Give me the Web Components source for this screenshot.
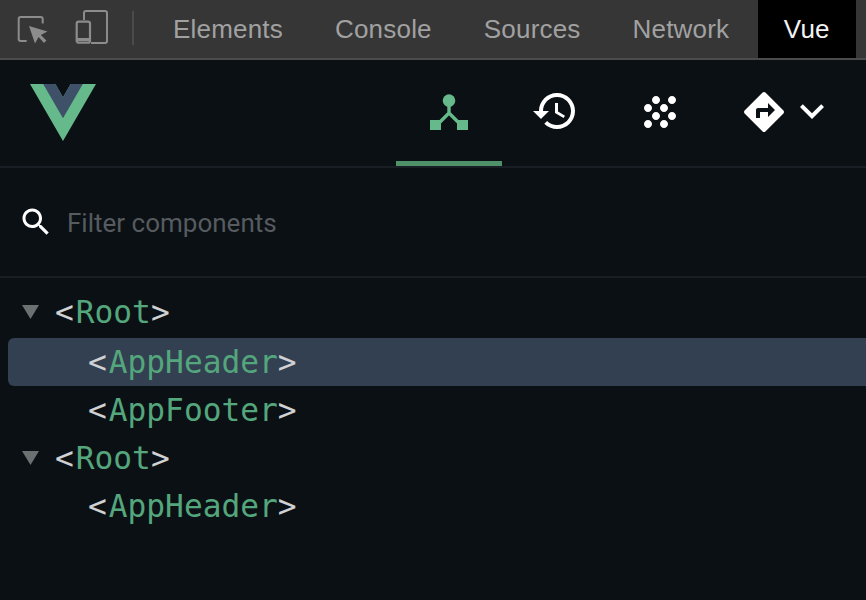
<!DOCTYPE html>
<html>
<head>
<meta charset="utf-8">
<title>Vue devtools</title>
<style>
  html, body { margin: 0; height: 100%; background: #0b1014; }
  body { display: flex; flex-direction: column; height: 600px; overflow: hidden; }
</style>
</head>
<body>
<devtools-bar>
  <devtools-tab>Elements</devtools-tab>
  <devtools-tab>Console</devtools-tab>
  <devtools-tab>Sources</devtools-tab>
  <devtools-tab>Network</devtools-tab>
  <devtools-tab active>Vue</devtools-tab>
</devtools-bar>
<vue-header>
  <header-tab icon="tree" active></header-tab>
  <header-tab icon="history"></header-tab>
  <header-tab icon="grain"></header-tab>
  <header-tab icon="routing" menu></header-tab>
</vue-header>
<filter-box placeholder="Filter components"></filter-box>
<component-tree>
  <tree-row expanded>Root</tree-row>
  <tree-row depth="1" selected>AppHeader</tree-row>
  <tree-row depth="1">AppFooter</tree-row>
  <tree-row expanded>Root</tree-row>
  <tree-row depth="1">AppHeader</tree-row>
</component-tree>

<script>
// material icon paths, 24 unit box
const ICONS = {
  history: 'M13 3c-4.97 0-9 4.03-9 9H1l3.89 3.89.07.14L9 12H6c0-3.87 3.13-7 7-7s7 3.13 7 7-3.13 7-7 7c-1.93 0-3.68-.79-4.94-2.06l-1.42 1.42C8.27 19.99 10.51 21 13 21c4.97 0 9-4.03 9-9s-4.03-9-9-9zm-1 5v5l4.28 2.54.72-1.21-3.5-2.08V8H12z',
  grain: 'M10 12c-1.1 0-2 .9-2 2s.9 2 2 2 2-.9 2-2-.9-2-2-2zM6 8c-1.1 0-2 .9-2 2s.9 2 2 2 2-.9 2-2-.9-2-2-2zm0 8c-1.1 0-2 .9-2 2s.9 2 2 2 2-.9 2-2-.9-2-2-2zm12-8c1.1 0 2-.9 2-2s-.9-2-2-2-2 .9-2 2 .9 2 2 2zm-4 8c-1.1 0-2 .9-2 2s.9 2 2 2 2-.9 2-2-.9-2-2-2zm4-4c-1.1 0-2 .9-2 2s.9 2 2 2 2-.9 2-2-.9-2-2-2zm-4-4c-1.1 0-2 .9-2 2s.9 2 2 2 2-.9 2-2-.9-2-2-2zm-4-4c-1.1 0-2 .9-2 2s.9 2 2 2 2-.9 2-2-.9-2-2-2z',
  routing: 'M21.71 11.29l-9-9c-.39-.39-1.02-.39-1.41 0l-9 9c-.39.39-.39 1.02 0 1.41l9 9c.39.39 1.02.39 1.41 0l9-9c.39-.38.39-1.01 0-1.41zM14 14.5V12h-4v3H8v-4c0-.55.45-1 1-1h5V7.5l3.5 3.5-3.5 3.5z',
  more: 'M16.59 8.59L12 13.17 7.41 8.59 6 10l6 6 6-6z',
  search: 'M15.5 14h-.79l-.28-.27C15.41 12.59 16 11.11 16 9.5 16 5.91 13.09 3 9.5 3S3 5.91 3 9.5 5.91 16 9.5 16c1.61 0 3.09-.59 4.23-1.57l.27.28v.79l5 4.99L20.49 19l-4.99-5zm-6 0C7.01 14 5 11.99 5 9.5S7.01 5 9.5 5 14 7.01 14 9.5 11.99 14 9.5 14z'
};

class DevtoolsBar extends HTMLElement {
  constructor() {
    super();
    this.attachShadow({ mode: 'open' });
    this.shadowRoot.innerHTML = `
      <style>
        :host {
          display: flex;
          flex: none;
          height: 58px;
          padding-left: 14px;
          background: #363636;
          border-bottom: 2px solid #4b4b4b;
          font: 26px "Liberation Sans", Arial, sans-serif;
          letter-spacing: .2px;
        }
        svg { flex: none; width: 36px; height: 58px; fill: none; stroke: #8c8c8c; stroke-width: 2; }
        svg + svg { margin-left: 24px; }
        .sep { flex: none; width: 2px; height: 34px; margin: 11px 13px 0 22px; background: #4b4b4b; }
      </style>
      <svg viewBox="0 0 36 58">
        <path d="M12.7 41H6.7a2 2 0 0 1-2-2V19a2 2 0 0 1 2-2h20a2 2 0 0 1 2 2v4.5"/>
        <path d="M15 26l6 17.5 3.6-6.5 5.4 6 2.4-2.5-5.5-5.5 6.6-3.5z" fill="#8c8c8c" stroke="none"/>
      </svg>
      <svg viewBox="0 0 36 58">
        <path d="M10 20v-7a2 2 0 0 1 2-2h19a2 2 0 0 1 2 2v28a2 2 0 0 1-2 2H17"/>
        <rect x="2.7" y="21.7" width="13.3" height="21" rx="2" stroke-width="2.2"/>
        <path d="M3 39.5h13" stroke-width="3"/>
      </svg>
      <div class="sep"></div>
      <slot></slot>
    `;
  }
}

class DevtoolsTab extends HTMLElement {
  constructor() {
    super();
    this.attachShadow({ mode: 'open' });
    this.shadowRoot.innerHTML = `
      <style>
        :host {
          display: flex;
          align-items: center;
          padding: 0 26px;
          color: #a1a1a1;
        }
        :host([active]) { background: #000; color: #f2f2f2; margin-left: 2.5px; }
      </style>
      <slot></slot>
    `;
  }
}

class VueHeader extends HTMLElement {
  constructor() {
    super();
    this.attachShadow({ mode: 'open' });
    this.shadowRoot.innerHTML = `
      <style>
        :host {
          display: flex;
          flex: none;
          align-items: flex-start;
          height: 106px;
          padding: 0 4px 0 30px;
          border-bottom: 2px solid #181e24;
        }
        .logo { flex: none; width: 66px; height: 57px; margin-top: 24px; }
        .tabs { display: flex; margin-left: auto; height: 106px; }
      </style>
      <svg class="logo" viewBox="0 0 261.76 226.69" preserveAspectRatio="none">
        <path fill="#65b98a" d="M161.096.001l-30.225 52.351L100.647.001H-.005l130.877 226.688L261.749.001z"/>
        <path fill="#3e5168" d="M161.096.001l-30.225 52.351L100.647.001H52.346l78.526 136.01L209.398.001z"/>
      </svg>
      <div class="tabs"><slot></slot></div>
    `;
  }
}

class HeaderTab extends HTMLElement {
  constructor() {
    super();
    this.attachShadow({ mode: 'open' });
    const icon = this.getAttribute('icon');
    // the tree icon is not a material one, so it has its own drawing
    const glyph = icon === 'tree'
      ? `<svg viewBox="0 0 48 48">
           <circle cx="24" cy="13.6" r="6.3"/>
           <rect x="5" y="33" width="11" height="10"/>
           <rect x="32" y="33" width="11" height="10"/>
           <path d="M24 17v9L13 37M24 26l11 11" fill="none" stroke="currentColor" stroke-width="3.4"/>
         </svg>`
      : `<svg class="main" viewBox="0 0 24 24"><path d="${ICONS[icon]}"/></svg>`;
    const more = this.hasAttribute('menu')
      ? `<svg viewBox="0 0 24 24"><path d="${ICONS.more}"/></svg>`
      : '';
    this.shadowRoot.innerHTML = `
      <style>
        :host {
          display: flex;
          flex: none;
          box-sizing: border-box;
          height: 106px;
          padding: 27px 29px 0;
          color: #fff;
        }
        :host([menu]) { padding: 27px 26px 0; }
        :host([icon="grain"]) { padding: 28px 30px 0 28px; }
        :host([menu]) .main { margin-top: 1px; }
        :host([active]) {
          color: #65b98a;
          border-bottom: 5px solid #4f9169;
        }
        svg { display: block; width: 48px; height: 48px; fill: currentColor; }
      </style>
      ${glyph}${more}
    `;
  }
}

class FilterBox extends HTMLElement {
  constructor() {
    super();
    this.attachShadow({ mode: 'open' });
    this.shadowRoot.innerHTML = `
      <style>
        :host {
          display: flex;
          flex: none;
          align-items: center;
          height: 108px;
          padding-left: 18px;
          border-bottom: 2px solid #181e24;
          box-sizing: content-box;
        }
        svg { flex: none; width: 36px; height: 36px; fill: #fff; margin-right: 13px; }
        input {
          flex: 1;
          min-width: 0;
          margin-top: 2px;
          padding: 0;
          border: 0;
          outline: 0;
          background: none;
          color: #fff;
          font: 26px Roboto, sans-serif;
        }
        input::placeholder { color: #565b5f; opacity: 1; }
      </style>
      <svg viewBox="0 0 24 24"><path d="${ICONS.search}"/></svg>
      <input type="text" placeholder="${this.getAttribute('placeholder') || ''}">
    `;
  }
}

class ComponentTree extends HTMLElement {
  constructor() {
    super();
    this.attachShadow({ mode: 'open' });
    this.shadowRoot.innerHTML = `
      <style>
        :host { display: block; padding: 10px 0 0 8px; overflow: hidden; }
        ::slotted(tree-row:first-child) { margin-bottom: 2px; }
      </style>
      <slot></slot>
    `;
  }
}

class TreeRow extends HTMLElement {
  constructor() {
    super();
    this.attachShadow({ mode: 'open' });
    const depth = Number(this.getAttribute('depth') || 0);
    this.shadowRoot.innerHTML = `
      <style>
        :host {
          display: flex;
          align-items: center;
          height: 48px;
          margin-right: -8px;
          border-radius: 6px;
          padding-left: ${14 + depth * 33}px;
          font: 31.2px "DejaVu Sans Mono", monospace;
          color: #cfd1d2;
          white-space: pre;
        }
        :host([selected]) { background: #334052; }
        .arrow { flex: none; width: 33px; height: 14px; }
        .arrow svg { display: none; width: 17px; height: 14px; fill: #6b7071; }
        :host([expanded]) .arrow svg { display: block; }
        .name { color: #54a67c; margin-left: 2px; }
      </style>
      <span class="arrow"><svg viewBox="0 0 17 14"><path d="M0 0h17L8.5 14z"/></svg></span>
      <span>&lt;<span class="name"><slot></slot></span>&gt;</span>
    `;
  }
}

customElements.define('devtools-bar', DevtoolsBar);
customElements.define('devtools-tab', DevtoolsTab);
customElements.define('vue-header', VueHeader);
customElements.define('header-tab', HeaderTab);
customElements.define('filter-box', FilterBox);
customElements.define('component-tree', ComponentTree);
customElements.define('tree-row', TreeRow);
</script>
</body>
</html>
